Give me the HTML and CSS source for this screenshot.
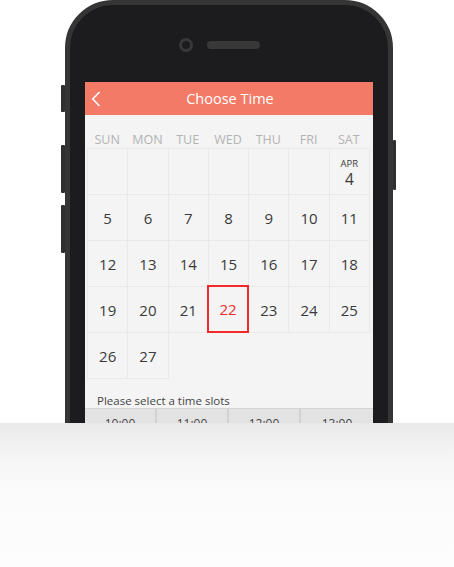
FILE: index.html
```html
<!DOCTYPE html>
<html>
<head>
<meta charset="utf-8">
<link rel="stylesheet" href="styles.css">
</head>
<body>
<div class="stage">
  <div class="phone">
    <span class="btn btn-l1"></span>
    <span class="btn btn-l2"></span>
    <span class="btn btn-l3"></span>
    <span class="btn btn-r1"></span>
    <div class="top">
      <span class="camera"></span>
      <span class="speaker"></span>
    </div>
    <div class="screen">
      <div class="header">
        <svg class="back" width="10" height="16" viewBox="0 0 10 16"><path d="M8.5 1 L1.8 8 L8.5 15" fill="none" stroke="#fff" stroke-width="1.6"/></svg>
        <span class="title">Choose Time</span>
      </div>
      <div class="cal">
        <div class="days">
          <span>SUN</span><span>MON</span><span>TUE</span><span>WED</span><span>THU</span><span>FRI</span><span>SAT</span>
        </div>
        <div class="grid">
          <div class="cell"></div><div class="cell"></div><div class="cell"></div><div class="cell"></div><div class="cell"></div><div class="cell"></div>
          <div class="cell month"><span class="mon">APR</span><span>4</span></div>
          <div class="cell">5</div><div class="cell">6</div><div class="cell">7</div><div class="cell">8</div><div class="cell">9</div><div class="cell">10</div><div class="cell">11</div>
          <div class="cell">12</div><div class="cell">13</div><div class="cell">14</div><div class="cell">15</div><div class="cell">16</div><div class="cell">17</div><div class="cell">18</div>
          <div class="cell">19</div><div class="cell">20</div><div class="cell">21</div><div class="cell sel">22</div><div class="cell">23</div><div class="cell">24</div><div class="cell">25</div>
          <div class="cell">26</div><div class="cell">27</div>
        </div>
      </div>
      <div class="prompt">Please select a time slots</div>
      <div class="slots">
        <div class="slot">10:00</div>
        <div class="slot">11:00</div>
        <div class="slot">12:00</div>
        <div class="slot">13:00</div>
      </div>
    </div>
  </div>
  <div class="fade"></div>
</div>
</body>
</html>
```
FILE: styles.css
```css
* { box-sizing: border-box; }
html, body { margin: 0; padding: 0; background: #fff; }
body { width: 454px; height: 567px; overflow: hidden; font-family: "Open Sans", "Noto Sans", sans-serif; }

.stage { position: relative; width: 454px; height: 567px; overflow: hidden; padding-left: 65px; }

.phone {
  position: relative;
  width: 328px;
  height: 660px;
  background: #1c1c1e;
  border: 5px solid #353535;
  border-radius: 48px;
}

.btn { position: absolute; background: #2f2f2f; border-radius: 1px; }
.btn-l1 { left: -9px; top: 80px; width: 4px; height: 27px; }
.btn-l2 { left: -9px; top: 140px; width: 4px; height: 48px; }
.btn-l3 { left: -9px; top: 200px; width: 4px; height: 48px; }
.btn-r1 { right: -8px; top: 135px; width: 3px; height: 50px; }

.top { height: 77px; display: flex; justify-content: center; align-items: flex-start; gap: 14px; padding-top: 33px; padding-right: 20px; }
.camera { width: 14px; height: 14px; border: 3px solid #383838; border-radius: 50%; }
.speaker { width: 53px; height: 8px; margin-top: 3px; background: #383838; border-radius: 4px; }

.screen { margin-left: 15px; width: 288px; height: 560px; background: #f4f4f4; }

.header { position: relative; height: 33px; background: #f37a66; display: flex; align-items: center; justify-content: center; }
.back { position: absolute; left: 6px; top: 9px; }
.title { color: #fff; font-size: 14.5px; padding-left: 2px; }

.cal { padding: 0 4px 0 2px; }
.days { display: grid; grid-template-columns: repeat(7, 1fr); height: 33px; align-items: end; padding-bottom: 0; }
.days span { text-align: center; color: #b3b3b3; font-size: 12.5px; line-height: 16px; }

.grid { display: grid; grid-template-columns: repeat(7, 1fr); grid-auto-rows: 46px; }
.cell {
  border: 1px solid #e9e9e9;
  margin: 0 -1px -1px 0;
  display: flex; align-items: center; justify-content: center;
  font-size: 15px; color: #3a3a3a;
}
.cell.month { flex-direction: column; font-size: 15.5px; line-height: 18px; padding-top: 1px; }
.cell.month .mon { font-size: 9.5px; line-height: 13px; }
.cell.sel { border: 2px solid #f22a2a; color: #f22a2a; position: relative; margin: -1px -1px -1px -1px; z-index: 1; }

.prompt { padding: 15px 0 0 12px; font-size: 11.5px; color: #444; height: 30px; line-height: 16px; }

.slots { display: grid; grid-template-columns: repeat(4, 1fr); border-top: 1px solid #d4d4d4; }
.slot { height: 36px; background: #e3e3e3; border-right: 2px solid #d2d2d2; text-align: center; font-size: 12px; color: #444; padding-top: 6px; }
.slot:last-child { border-right: none; }

.fade {
  position: absolute; left: 0; right: 0; top: 423px; bottom: 0;
  background: linear-gradient(#e9e9e9 0%, #f6f6f6 25%, #fbfbfb 50%, #fdfdfd 100%);
}
```
